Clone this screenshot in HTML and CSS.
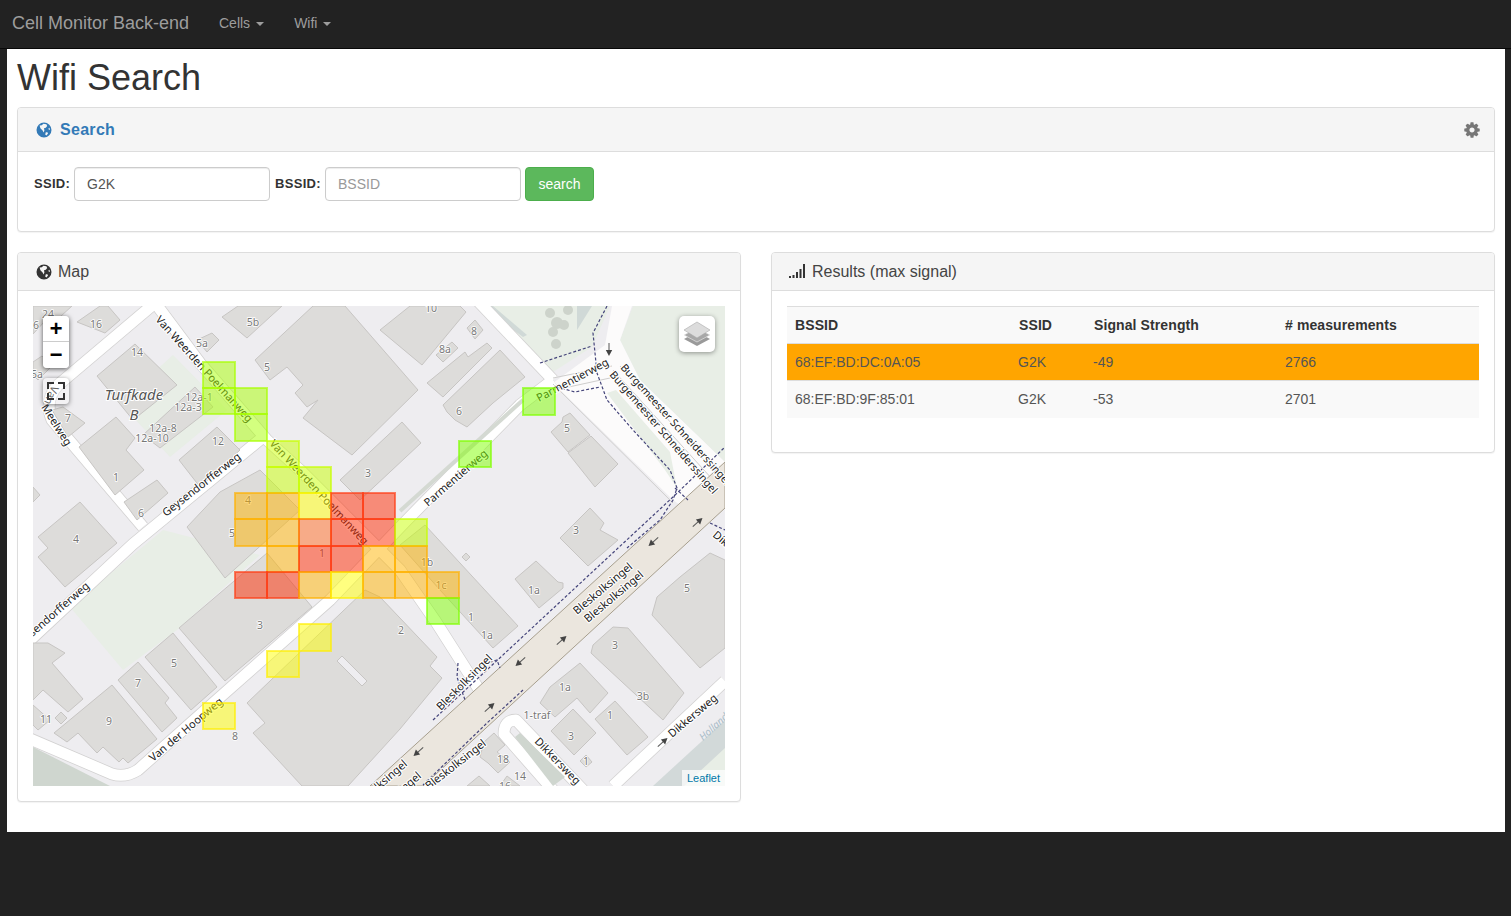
FILE: index.html
```html
<!DOCTYPE html>
<html lang="en">
<head>
<meta charset="utf-8">
<title>Wifi Search</title>
<link rel="stylesheet" href="styles.css">
</head>
<body>
<svg class="defs" width="0" height="0" aria-hidden="true">
  <defs>
    <symbol id="globe" viewBox="0 0 16 16">
      <path fill-rule="evenodd" d="M8 .5a7.5 7.5 0 1 1 0 15a7.5 7.5 0 0 1 0-15zM3.6 3.6L4.4 6.2L6.6 8.6L7.6 10.4L8.4 8.4L8 6.2L9.8 5.8L11.2 4L10.4 2.2L7.4 1.8L5.8 3.2zM9.8 10.2L9.2 12.4L10.4 13.4L12 11.6L11.4 10.2zM12.4 6.4L13 8L14 7.4L13.4 5.8z"/>
    </symbol>
    <g id="oneway"><path class="arrow-line" d="M-7 0H3"/><path class="arrow-head" d="M6 0L0-3.2V3.2z"/></g>
    <g id="roads">
      <path d="M153 300L200 363L267 440L300 470L340 510L400 570L436 622L478 688"/>
      <path d="M155 303L58 385Q44 400 52 420L143 527"/>
      <path d="M28 642L133 544L262 438"/>
      <path d="M28 738L112 774Q125 778 138 770L210 706L330 600L405 522L520 405L553 380"/>
      <path d="M477 300L553 380"/>
      <path d="M613 786L725 681"/>
      <path d="M553 790L504 734Q504 720 516 720L583 790"/>
    </g>
  </defs>
</svg>

<nav class="navbar">
  <a class="brand" href="#">Cell Monitor Back-end</a>
  <ul class="nav">
    <li><a href="#">Cells<span class="caret"></span></a></li>
    <li><a href="#">Wifi<span class="caret"></span></a></li>
  </ul>
</nav>

<main class="page">
  <h1>Wifi Search</h1>

  <section class="panel">
    <header class="panel-heading search-heading">
      <svg class="icon-globe" width="16" height="16"><use href="#globe"/></svg>
      <h2 class="search-title">Search</h2>
      <svg class="icon-cog" viewBox="0 0 1792 1792" width="18" height="18"><path d="M1152 896q0-106-75-181t-181-75-181 75-75 181 75 181 181 75 181-75 75-181zm512-109v222q0 12-8 23t-20 13l-185 28q-19 54-39 91 35 50 107 138 10 12 10 25t-9 23q-27 37-99 108t-94 71q-12 0-26-9l-138-108q-44 23-91 38-16 136-29 186-7 28-36 28h-222q-14 0-24.5-8.5t-11.5-21.5l-28-184q-49-16-90-37l-141 107q-10 9-25 9-14 0-25-11-126-114-165-168-7-10-7-23 0-12 8-23 15-21 51-66.5t54-70.5q-27-50-41-99l-183-27q-13-2-21-12.5t-8-23.5v-222q0-12 8-23t19-13l186-28q14-46 39-92-40-57-107-138-10-12-10-24 0-10 9-23 26-36 98.5-107.5t94.5-71.5q13 0 26 10l138 107q44-23 91-38 16-136 29-186 7-28 36-28h222q14 0 24.5 8.5t11.5 21.5l28 184q49 16 90 37l142-107q9-9 24-9 13 0 25 10 129 119 165 170 7 8 7 22 0 12-8 23-15 21-51 66.5t-54 70.5q26 50 41 98l183 28q13 2 21 12.5t8 23.5z"/></svg>
    </header>
    <div class="panel-body">
      <form class="search-form">
        <label class="label-ssid" for="ssid">SSID:</label>
        <input id="ssid" type="text" value="G2K" placeholder="SSID">
        <label class="label-bssid" for="bssid">BSSID:</label>
        <input id="bssid" type="text" placeholder="BSSID">
        <button type="button">search</button>
      </form>
    </div>
  </section>

  <div class="columns">
    <section class="panel">
      <header class="panel-heading sub-heading">
        <svg class="icon-globe dark" width="16" height="16"><use href="#globe"/></svg>
        <h2 class="sub-title">Map</h2>
      </header>
      <div class="panel-body">
        <div class="map">
          <svg class="map-canvas" viewBox="33 306 692 480" width="692" height="480">
            <!-- land cover -->
            <path class="park" d="M120 403L173 355L227 410L170 457z"/>
            <path class="park" d="M70 607L163 530L260 555L177 630L123 670z"/>
            <path class="park" d="M490 306L553 372L592 347L610 306z"/>
            <path class="park" d="M633 306L620 340L640 380L725 462V306z"/>
            <path class="pond" d="M493 306L527 335L523 337L497 318L486 306z"/>
            <path class="pond" d="M577 306H592L577 330z"/>
            <g class="tree">
              <circle cx="557" cy="323" r="6"/><circle cx="568" cy="310" r="5"/><circle cx="553" cy="332" r="5"/><circle cx="564" cy="325" r="5"/><circle cx="556" cy="344" r="5"/><circle cx="550" cy="313" r="5"/>
            </g>
            <path class="paved" d="M553 383L605 345L612 306H632L620 340L640 380L725 462V468L680 505L673 500z"/>
            <path class="park" d="M607 393L616 390L670 452L677 488L665 470z"/>
            <path class="water" d="M653 786L725 720V786z"/>
            <path class="park" d="M684 786L725 748V786z"/>
            <path class="water-green" d="M33 747L110 786H33z"/>

            <!-- roads -->
            <use href="#roads" class="road-casing"/>
            <use href="#roads" class="road"/>
            <path class="strip" d="M400 511L523 400"/>
            <path class="strip-fill" d="M515 737L520 733L565 777L553 786z"/>
            <path class="hairline" d="M553 384L673 503"/>
            <path class="hairline" d="M613 370L713 480"/>
            <path class="hairline" d="M620 366L725 483"/>
            <path class="hairline" d="M553 378L612 366"/>
            <path class="hairline" d="M555 390L610 378"/>
            <path class="singel" d="M370 786L725 462V508L423 786z"/>

            <!-- buildings -->
            <g class="buildings">
              <path d="M97 376L135 344L177 385L133 420z"/>
              <path d="M77 322L100 306H108L120 320L105 333z"/>
              <path d="M33 306H72L50 326L45 321L33 334z"/>
              <path d="M33 362L42 356L52 366L38 380L33 375z"/>
              <path d="M222 317L238 306H282L247 338z"/>
              <path d="M197 340L212 333L219 340L207 352z"/>
              <path d="M255 360L313 306H345L418 390L352 455L303 418L318 400L307 407L295 393L303 385L287 367L270 380z"/>
              <path d="M340 480L402 422L421 443L360 500z"/>
              <path d="M380 330L410 306H460L466 312L422 365z"/>
              <path d="M467 328L475 320L483 330L475 339z"/>
              <path d="M436 355L452 342L458 348L443 362z"/>
              <path d="M427 383L465 352L468 357L487 343L492 348L443 397z"/>
              <path d="M443 405L500 350L525 377L493 403L467 427L455 420L447 412z"/>
              <path d="M551 432L562 422L563 417L570 413L590 435L568 452z"/>
              <path d="M568 453L591 436L618 464L595 487z"/>
              <path d="M560 538L590 508L604 523L600 530L618 540L588 566z"/>
              <path d="M462 557L466 553L470 557L466 561z"/>
              <path d="M515 579L536 561L558 582L563 583L563 588L539 608z"/>
              <path d="M400 545L425 525L518 626L493 648L440 590z"/>
              <path d="M652 615L657 597L680 577L710 553L725 560V648L700 668z"/>
              <path d="M591 653L593 645L613 627L628 628L684 693L663 720L607 668z"/>
              <path d="M540 703L550 687L580 663L608 693L590 713L577 698L555 717z"/>
              <path d="M551 731L573 709L596 733L574 755z"/>
              <path d="M595 719L615 701L648 737L627 755z"/>
              <path d="M580 761L586 755L592 762L586 767z"/>
              <path d="M247 703L365 590L380 597L437 657L430 666L442 678L400 729L348 786H302L253 733L265 723z"/>
              <path d="M38 537L80 502L117 543L65 587L38 557L48 548z"/>
              <path d="M179 628L267 553L312 607L225 681z"/>
              <path d="M145 657L173 633L177 638L217 687L191 710z"/>
              <path d="M118 680L138 662L169 698L165 703L177 718L162 732z"/>
              <path d="M54 733L112 685L157 739L128 763L123 758L119 762L103 747L97 753L78 733L67 742z"/>
              <path d="M33 643L48 643L65 653L52 663L83 699L68 712L43 690L33 700z"/>
              <path d="M55 718L61 712L67 718L61 724z"/>
              <path d="M33 705L50 720L38 730L33 725z"/>
              <path d="M79 447L116 417L135 438L126 450L144 470L115 495z"/>
              <path d="M124 502L157 480L168 493L137 520z"/>
              <path d="M52 410L63 407L85 423L68 437z"/>
              <path d="M179 460L217 427L240 450L200 487z"/>
              <path d="M143 435L195 387L213 407L160 448z"/>
              <path d="M187 527L220 492L260 470L300 510L225 578z"/>
              <path d="M33 487L40 495L33 502z"/>
              <path d="M484 742L494 733L505 745L497 752L510 762L498 773L488 763L480 757z"/>
              <path d="M467 786L479 776L490 786z"/>
              <path d="M500 786L507 776L520 786z"/>
            </g>
            <path class="slot" d="M337 661L342 656L367 681L362 686z"/>

            <!-- footpaths -->
            <g class="footway">
              <path d="M433 720L673 497L725 447"/>
              <path d="M423 785L487 723L523 690"/>
              <path d="M607 306L593 333L597 373L607 400L633 430L670 470L677 488L673 500L660 520L627 548"/>
              <path d="M540 363L592 346"/>
              <path d="M557 387L575 392L600 387"/>
              <path d="M675 488L688 500"/>
              <path d="M710 523L725 530"/>
              <path d="M458 663L457 677L465 700"/>
              <path d="M480 665L497 660L500 668"/>
            </g>

            <!-- one-way arrows -->
            <use href="#oneway" transform="translate(562 640) rotate(-42)"/>
            <use href="#oneway" transform="translate(520 662) rotate(138)"/>
            <use href="#oneway" transform="translate(490 707) rotate(-42)"/>
            <use href="#oneway" transform="translate(418 752) rotate(138)"/>
            <use href="#oneway" transform="translate(698 522) rotate(-42)"/>
            <use href="#oneway" transform="translate(653 542) rotate(138)"/>
            <use href="#oneway" transform="translate(663 742) rotate(-42)"/>
            <use href="#oneway" transform="translate(609 350) rotate(90)"/>

            <!-- street names -->
            <g class="street">
              <text transform="translate(155 320) rotate(48)">Van Weerden Poelmanweg</text>
              <text transform="translate(269 444) rotate(47)">Van Weerden Poelmanweg</text>
              <text transform="translate(428 507) rotate(-41)">Parmentierweg</text>
              <text transform="translate(539 402) rotate(-28)">Parmentierweg</text>
              <text class="tight" transform="translate(620 368) rotate(48)">Burgemeester Schneiderssingel</text>
              <text class="tight" transform="translate(609 375) rotate(49)">Burgemeester Schneiderssingel</text>
              <text transform="translate(166 517) rotate(-38)">Geysendorfferweg</text>
              <text class="end" transform="translate(90 587) rotate(-41)">Geysendorfferweg</text>
              <text transform="translate(41 407) rotate(58)">Meelweg</text>
              <text transform="translate(52 385) rotate(115)">Van</text>
              <text transform="translate(577 615) rotate(-40)">Bleskolksingel</text>
              <text transform="translate(588 623) rotate(-40)">Bleskolksingel</text>
              <text class="end" transform="translate(408 765) rotate(-41)">Bleskolksingel</text>
              <text class="end" transform="translate(422 777) rotate(-41)">Bleskolksingel</text>
              <text transform="translate(441 711) rotate(-45)">Bleskolksingel</text>
              <text transform="translate(429 790) rotate(-38)">Bleskolksingel</text>
              <text transform="translate(534 742) rotate(46)">Dikkersweg</text>
              <text transform="translate(672 738) rotate(-40)">Dikkersweg</text>
              <text transform="translate(712 536) rotate(40)">Dikkersweg</text>
              <text transform="translate(153 762) rotate(-40)">Van der Hoopweg</text>
            </g>
            <text class="water-label" transform="translate(703 741) rotate(-42)">Hollandse</text>
            <g class="place">
              <text x="134" y="400">Turfkade</text>
              <text x="134" y="420">B</text>
            </g>

            <!-- house numbers -->
            <g class="num">
              <text x="48" y="318">24</text><text x="96" y="328">16</text><text x="36" y="329">6</text><text x="137" y="356">14</text><text x="37" y="378">5a</text>
              <text x="68" y="422">7</text><text x="116" y="481">1</text><text x="218" y="445">12</text><text x="141" y="517">6</text>
              <text x="199" y="401">12a-1</text><text x="188" y="411">12a-3</text><text x="163" y="432">12a-8</text><text x="152" y="442">12a-10</text>
              <text x="253" y="326">5b</text><text x="202" y="347">5a</text><text x="267" y="371">5</text><text x="368" y="477">3</text>
              <text x="248" y="504">4</text><text x="232" y="537">5</text><text x="322" y="557">1</text><text x="427" y="566">1b</text><text x="441" y="589">1c</text>
              <text x="471" y="621">1</text><text x="487" y="639">1a</text><text x="401" y="634">2</text><text x="76" y="543">4</text><text x="260" y="629">3</text>
              <text x="174" y="667">5</text><text x="138" y="687">7</text><text x="109" y="725">9</text><text x="46" y="723">11</text><text x="235" y="740">8</text>
              <text x="431" y="312">10</text><text x="474" y="335">8</text><text x="445" y="353">8a</text><text x="459" y="415">6</text><text x="567" y="432">5</text>
              <text x="576" y="534">3</text><text x="534" y="594">1a</text><text x="687" y="592">5</text><text x="615" y="649">3</text><text x="643" y="700">3b</text>
              <text x="565" y="691">1a</text><text x="610" y="719">1</text><text x="571" y="740">3</text><text x="586" y="765">1</text><text x="537" y="719">1-traf</text>
              <text x="503" y="763">18</text><text x="520" y="780">14</text><text x="505" y="790">16</text>
            </g>

            <!-- signal heat cells -->
            <g class="heat">
              <rect class="lime" x="203" y="362" width="32" height="26"/>
              <rect class="lime" x="203" y="388" width="32" height="26"/>
              <rect class="lime" x="235" y="388" width="32" height="26"/>
              <rect class="lime" x="235" y="414" width="32" height="27"/>
              <rect class="lime-y" x="267" y="441" width="32" height="26"/>
              <rect class="lime-y" x="267" y="467" width="32" height="26"/>
              <rect class="lime-y" x="299" y="467" width="32" height="26"/>
              <rect class="green" x="523" y="388" width="32" height="27"/>
              <rect class="green" x="459" y="441" width="32" height="26"/>
              <rect class="orange" x="235" y="493" width="32" height="26"/>
              <rect class="orange" x="267" y="493" width="32" height="26"/>
              <rect class="yellow" x="299" y="493" width="32" height="26"/>
              <rect class="red" x="331" y="493" width="32" height="26"/>
              <rect class="red" x="363" y="493" width="32" height="26"/>
              <rect class="orange" x="235" y="519" width="32" height="27"/>
              <rect class="orange" x="267" y="519" width="32" height="27"/>
              <rect class="salmon" x="299" y="519" width="32" height="27"/>
              <rect class="red" x="331" y="519" width="32" height="27"/>
              <rect class="red" x="363" y="519" width="32" height="27"/>
              <rect class="lime-y" x="395" y="519" width="32" height="27"/>
              <rect class="orange" x="267" y="546" width="32" height="26"/>
              <rect class="red" x="299" y="546" width="32" height="26"/>
              <rect class="red" x="331" y="546" width="32" height="26"/>
              <rect class="orange" x="363" y="546" width="32" height="26"/>
              <rect class="orange" x="395" y="546" width="32" height="26"/>
              <rect class="red" x="235" y="572" width="32" height="26"/>
              <rect class="red" x="267" y="572" width="32" height="26"/>
              <rect class="orange" x="299" y="572" width="32" height="26"/>
              <rect class="yellow" x="331" y="572" width="32" height="26"/>
              <rect class="orange" x="363" y="572" width="32" height="26"/>
              <rect class="orange" x="395" y="572" width="32" height="26"/>
              <rect class="orange" x="427" y="572" width="32" height="26"/>
              <rect class="green" x="427" y="598" width="32" height="26"/>
              <rect class="yellow" x="299" y="624" width="32" height="27"/>
              <rect class="yellow" x="267" y="651" width="32" height="26"/>
              <rect class="yellow" x="203" y="703" width="32" height="26"/>
            </g>
          </svg>

          <div class="zoom-control">
            <a href="#" class="zoom-in">+</a>
            <a href="#" class="zoom-out">−</a>
          </div>
          <a href="#" class="fullscreen-control" aria-label="Fullscreen">
            <svg viewBox="0 0 26 26" width="26" height="26"><path d="M5 11V5H11M15 5H21V11M21 15V21H15M11 21H5V15"/></svg>
          </a>
          <a href="#" class="layers-control" aria-label="Layers">
            <svg viewBox="0 0 26 26" width="26" height="26">
              <path class="layer-low" d="M13 11L26 18L13 25L0 18z"/>
              <path class="layer-mid" d="M13 7L26 14L13 21L0 14z"/>
              <path class="layer-top" d="M13 1L26 9L13 17L0 9z"/>
            </svg>
          </a>
          <div class="attribution"><a href="#">Leaflet</a></div>
        </div>
      </div>
    </section>

    <section class="panel results">
      <header class="panel-heading sub-heading">
        <svg class="icon-signal" viewBox="0 0 16 14" width="16" height="14">
          <rect x="0" y="12" width="2" height="2"/><rect x="3.5" y="11" width="2" height="3"/><rect x="7" y="8" width="2" height="6"/><rect x="10.5" y="5" width="2" height="9"/><rect x="14" y="0" width="2" height="14"/>
        </svg>
        <h2 class="sub-title">Results (max signal)</h2>
      </header>
      <div class="panel-body">
        <table>
          <colgroup><col class="c1"><col class="c2"><col class="c3"><col class="c4"></colgroup>
          <thead>
            <tr><th>BSSID</th><th>SSID</th><th>Signal Strength</th><th># measurements</th></tr>
          </thead>
          <tbody>
            <tr class="best"><td>68:EF:BD:DC:0A:05</td><td>G2K</td><td>-49</td><td>2766</td></tr>
            <tr class="striped"><td>68:EF:BD:9F:85:01</td><td>G2K</td><td>-53</td><td>2701</td></tr>
          </tbody>
        </table>
      </div>
    </section>
  </div>
</main>
</body>
</html>
```

FILE: styles.css
```css
* { box-sizing: border-box; }
html, body { margin: 0; padding: 0; }
body {
  min-height: 916px;
  background: #222;
  color: #333;
  font-family: "Liberation Sans", Arial, sans-serif;
  font-size: 14px;
  line-height: 20px;
}
a { text-decoration: none; }
.defs { position: absolute; }

/* navbar */
.navbar {
  display: flex;
  align-items: center;
  height: 49px;
  padding: 0 0 2px 12px;
  background: #222;
  border-bottom: 1px solid #080808;
}
.brand { color: #9d9d9d; font-size: 18px; width: 192px; }
.nav { display: flex; margin: 0; padding: 0; list-style: none; }
.nav a { display: block; padding: 0 15px; color: #9d9d9d; }
.caret {
  display: inline-block;
  margin-left: 6px;
  vertical-align: middle;
  border-top: 4px solid;
  border-left: 4px solid transparent;
  border-right: 4px solid transparent;
}

/* page */
.page {
  margin: 0 6px 0 7px;
  padding: 0 10px 30px;
  background: #fff;
}
h1 {
  margin: 0;
  padding: 9px 0;
  font-size: 36px;
  font-weight: 500;
  line-height: 40px;
}

/* panels */
.panel {
  background: #fff;
  border: 1px solid #ddd;
  border-radius: 4px;
  box-shadow: 0 1px 1px rgba(0, 0, 0, .05);
}
.panel-heading {
  display: flex;
  align-items: center;
  background: #f5f5f5;
  border-bottom: 1px solid #ddd;
  border-radius: 3px 3px 0 0;
}
.search-heading { height: 44px; padding: 0 13px 0 18px; }
.sub-heading { height: 38px; padding: 0 15px 0 18px; }
.search-title {
  flex: 1;
  margin: 0 0 0 8px;
  color: #337ab7;
  font-size: 16px;
  font-weight: 700;
  letter-spacing: .3px;
}
.sub-title { margin: 0 0 0 6px; color: #444; font-size: 16px; font-weight: 400; }
.icon-globe { fill: #337ab7; }
.icon-globe.dark { fill: #333; }
.icon-cog { fill: #777; }
.icon-signal { fill: #333; margin: -2px 1px 0 -1px; }
.panel-body { padding: 15px; }

/* search form */
.search-form { display: flex; gap: 4px; margin-bottom: 15px; align-items: center; }
.search-form label {
  padding-left: 1px;
  font-size: 13px;
  font-weight: 700;
  letter-spacing: .3px;
  white-space: nowrap;
}
.label-ssid { width: 37px; }
.label-bssid { width: 47px; }
.search-form input {
  width: 196px;
  height: 34px;
  padding: 6px 12px;
  color: #555;
  font: inherit;
  background: #fff;
  border: 1px solid #ccc;
  border-radius: 4px;
  box-shadow: inset 0 1px 1px rgba(0, 0, 0, .075);
}
.search-form input::placeholder { color: #999; opacity: 1; }
.search-form button {
  width: 69px;
  height: 34px;
  padding: 0;
  color: #fff;
  font: inherit;
  background: #5cb85c;
  border: 1px solid #4cae4c;
  border-radius: 4px;
}

/* columns */
.columns {
  display: grid;
  grid-template-columns: 1fr 1fr;
  gap: 30px;
  align-items: start;
  margin-top: 20px;
}

/* map */
.map { position: relative; width: 692px; height: 480px; overflow: hidden; background: #eeedf0; }
.map-canvas { display: block; background: #eeedf0; font-family: "Noto Sans", sans-serif; }
.park { fill: #e8eee6; }
.pond { fill: #d0d9d7; }
.tree { fill: #cdd3cb; }
.paved { fill: #fcfbfb; }
.water { fill: #d2d9d9; }
.water-green { fill: #cfd6cf; }
.road, .road-casing { fill: none; stroke-linejoin: round; stroke-linecap: butt; }
.road { stroke: #fff; stroke-width: 11px; }
.road-casing { stroke: #d2d1d1; stroke-width: 12.5px; }
.strip { fill: none; stroke: #d4d9d2; stroke-width: 4px; }
.strip-fill { fill: #cfd6cf; }
.hairline { fill: none; stroke: #cfcecd; stroke-width: 1px; }
.singel { fill: #ebe6de; stroke: #a79f8e; stroke-width: 1px; }
.buildings path { fill: #dddcda; stroke: #c7c5c3; stroke-width: 1px; }
.slot { fill: #eeedf0; stroke: #c7c5c3; stroke-width: 1px; }
.footway path { fill: none; stroke: #44447a; stroke-width: 1.2px; stroke-dasharray: 3 2; }
.arrow-line { fill: none; stroke: #555; stroke-width: 1px; }
.arrow-head { fill: #444; }
.street text {
  fill: #222;
  font-size: 11px;
  paint-order: stroke;
  stroke: #fff;
  stroke-width: 2.2px;
  stroke-linejoin: round;
}
.street text.end { text-anchor: end; }
.street text.tight { font-size: 10.6px; }
.water-label { fill: #a9bcc8; font-size: 10px; font-style: italic; }
.place text {
  fill: #555;
  font-size: 15px;
  font-style: italic;
  text-anchor: middle;
  paint-order: stroke;
  stroke: #fff;
  stroke-width: 2px;
}
.num text {
  fill: #777;
  font-size: 10.5px;
  text-anchor: middle;
  paint-order: stroke;
  stroke: #fff;
  stroke-width: 1.5px;
}
.heat rect { stroke-width: 2px; stroke-opacity: .65; fill-opacity: .5; }
.heat .lime { fill: #a8ff00; stroke: #a8ff00; }
.heat .lime-y { fill: #c8ff00; stroke: #c8ff00; }
.heat .green { fill: #80ff00; stroke: #80ff00; }
.heat .yellow { fill: #ffff00; stroke: #ffee00; }
.heat .orange { fill: #ffb300; stroke: #ffb000; }
.heat .salmon { fill: #ff6a20; stroke: #ff7010; }
.heat .red { fill: #ff2a00; stroke: #ff3c14; }

.zoom-control {
  position: absolute;
  top: 10px;
  left: 10px;
  width: 26px;
  border-radius: 4px;
  box-shadow: 0 1px 5px rgba(0, 0, 0, .65);
}
.zoom-control a {
  display: block;
  height: 26px;
  color: #000;
  font: 700 22px/30px "Liberation Mono", monospace;
  text-align: center;
  background: #fff;
}
.zoom-in { border-bottom: 1px solid #ccc; border-radius: 4px 4px 0 0; }
.zoom-out { border-radius: 0 0 4px 4px; }
.fullscreen-control {
  position: absolute;
  top: 72px;
  left: 10px;
  width: 26px;
  height: 26px;
  background: rgba(255, 255, 255, .3);
  border-radius: 4px;
  box-shadow: 0 1px 5px rgba(0, 0, 0, .5);
}
.fullscreen-control svg { display: block; fill: none; stroke: #333; stroke-width: 2px; }
.layers-control {
  position: absolute;
  top: 10px;
  right: 10px;
  display: flex;
  align-items: center;
  justify-content: center;
  width: 36px;
  height: 36px;
  background: #fff;
  border-radius: 5px;
  box-shadow: 0 1px 5px rgba(0, 0, 0, .4);
}
.layer-low { fill: #9a9a9a; }
.layer-mid { fill: #a8a8a8; stroke: #eee; stroke-width: .6px; }
.layer-top { fill: #dcdcdc; stroke: #aaa; stroke-width: .6px; }
.attribution {
  position: absolute;
  right: 0;
  bottom: 0;
  padding: 0 5px;
  font-size: 11px;
  font-weight: 400;
  line-height: 16px;
  background: rgba(255, 255, 255, .7);
}
.attribution a { color: #0078a8; }

/* table */
table {
  width: 100%;
  margin-bottom: 19px;
  border-collapse: collapse;
  table-layout: fixed;
}
.c1 { width: 224px; }
.c2 { width: 75px; }
.c3 { width: 191px; }
.c4 { width: 202px; }
th, td {
  height: 37px;
  padding: 8px;
  text-align: left;
  border-top: 1px solid #ddd;
}
th { background: #f9f9f9; font-weight: 700; letter-spacing: .1px; }
td { color: #555; }
td:nth-child(2), td:nth-child(3) { padding-left: 7px; }
.best td { background: #ffa500; }
.striped td { background: #f9f9f9; }
```
